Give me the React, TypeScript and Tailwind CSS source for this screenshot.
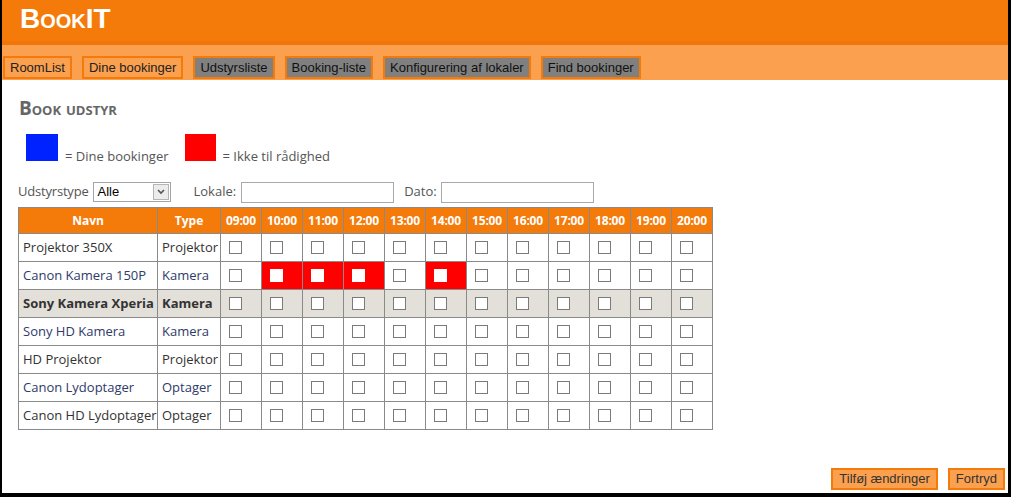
import React from "react";

const hours = ["09:00", "10:00", "11:00", "12:00", "13:00", "14:00", "15:00", "16:00", "17:00", "18:00", "19:00", "20:00"];

const rows = [
    { name: "Projektor 350X", type: "Projektor", taken: [] as number[] },
    { name: "Canon Kamera 150P", type: "Kamera", taken: [1, 2, 3, 5] },
    { name: "Sony Kamera Xperia", type: "Kamera", taken: [], selected: true },
    { name: "Sony HD Kamera", type: "Kamera", taken: [] },
    { name: "HD Projektor", type: "Projektor", taken: [] },
    { name: "Canon Lydoptager", type: "Optager", taken: [] },
    { name: "Canon HD Lydoptager", type: "Optager", taken: [] },
];

const navItems = [
    { label: "RoomList", active: true },
    { label: "Dine bookinger", active: true },
    { label: "Udstyrsliste", active: false },
    { label: "Booking-liste", active: false },
    { label: "Konfigurering af lokaler", active: false },
    { label: "Find bookinger", active: false },
];

function Box({ taken }: { taken: boolean }) {
    return (
        <span
            className={
                taken
                    ? "block w-[13px] h-[13px] bg-white"
                    : "block w-[13px] h-[13px] bg-white border border-[#7a7a7a]"
            }
        />
    );
}

export default function App() {
    return (
        <div className="w-[1011px] h-[497px] bg-black pl-[2px] pr-[3px] pb-[4px] flex flex-col">
            <div className="flex-1 bg-white flex flex-col font-['Open_Sans',sans-serif]">
                <div className="h-[45px] bg-[#f47b0a] border-b-[4px] border-[#f17508] flex items-center pl-[18px]">
                    <h1 className="text-white font-bold text-[28px] [font-variant:small-caps] leading-none font-['Liberation_Sans',Arial,sans-serif] -mt-[4px]">
                        BookIT
                    </h1>
                </div>

                <nav className="h-[35px] bg-[#fba04e] flex items-end gap-[10px] pl-[1px] pb-[1px]">
                    {navItems.map((item) => (
                        <span
                            key={item.label}
                            className={
                                item.active
                                    ? "h-[23px] flex items-center px-[5px] border-2 border-[#f47b0a] bg-[#fba04e] text-[13px] text-[#222] font-['Liberation_Sans',Arial,sans-serif]"
                                    : "h-[23px] flex items-center px-[5px] border-2 border-[#f47b0a] bg-[#808080] text-[13px] text-[#111] font-['Liberation_Sans',Arial,sans-serif]"
                            }
                        >
                            {item.label}
                        </span>
                    ))}
                </nav>

                <div className="flex-1 flex flex-col px-[16px]">
                    <h2 className="mt-[19px] ml-[1px] text-[19px] font-bold text-[#666] [font-variant:small-caps] leading-none font-['Open_Sans',sans-serif]">
                        Book udstyr
                    </h2>

                    <div className="mt-[16px] ml-[8px] flex items-end text-[13px] text-[#555]">
                        <span className="w-[32px] h-[27px] bg-[#0022ff]" />
                        <span className="ml-[7px] mb-[-5px]">= Dine bookinger</span>
                        <span className="ml-[16px] w-[31px] h-[27px] bg-[#ff0000]" />
                        <span className="ml-[7px] mb-[-5px]">= Ikke til rådighed</span>
                    </div>

                    <div className="mt-[20px] flex items-center text-[13px] text-[#555] h-[22px]">
                        <span className="tracking-[-0.2px]">Udstyrstype</span>
                        <div className="ml-[5px] w-[78px] h-[20px] border border-[#a5a5a5] flex items-center justify-between">
                            <span className="pl-[3px] text-black text-[13px] font-['Liberation_Sans',Arial,sans-serif]">Alle</span>
                            <span className="w-[16px] h-[16px] mr-[1px] bg-[#ececec] border border-[#b5b5b5] flex items-center justify-center">
                                <svg width="8" height="6" viewBox="0 0 8 6">
                                    <path d="M1 1 L4 4 L7 1" stroke="#555" strokeWidth="1.6" fill="none" />
                                </svg>
                            </span>
                        </div>
                        <span className="ml-[22px]">Lokale:</span>
                        <span className="ml-[5px] w-[153px] h-[21px] border border-[#a9a9a9]" />
                        <span className="ml-[10px]">Dato:</span>
                        <span className="ml-[4px] w-[153px] h-[21px] border border-[#a9a9a9]" />
                    </div>

                    <table className="mt-[4px] table-fixed border-collapse w-[695px] text-[13px]">
                        <colgroup>
                            <col className="w-[139px]" />
                            <col className="w-[63px]" />
                            {hours.map((h) => (
                                <col key={h} className="w-[41px]" />
                            ))}
                        </colgroup>
                        <thead>
                            <tr className="h-[26px] bg-[#f47b0a] text-white text-[12px] font-bold">
                                <th className="border border-[#8a8a8a] text-center">Navn</th>
                                <th className="border border-[#8a8a8a] text-center">Type</th>
                                {hours.map((h) => (
                                    <th key={h} className="border border-[#8a8a8a] text-center px-0 tracking-[-0.2px]">
                                        {h}
                                    </th>
                                ))}
                            </tr>
                        </thead>
                        <tbody>
                            {rows.map((row, i) => {
                                const tone = row.selected
                                    ? "text-[#333] font-bold"
                                    : i % 2 === 1
                                    ? "text-[#2e3a6a]"
                                    : "text-[#333]";
                                return (
                                    <tr key={row.name} className={row.selected ? "h-[28px] bg-[#e3e0da]" : "h-[28px] bg-white"}>
                                        <td className={"border border-[#8a8a8a] pl-[4px] whitespace-nowrap " + tone}>{row.name}</td>
                                        <td className={"border border-[#8a8a8a] pl-[4px] whitespace-nowrap " + tone}>{row.type}</td>
                                        {hours.map((h, j) => {
                                            const taken = row.taken.includes(j);
                                            return (
                                                <td
                                                    key={h}
                                                    className={
                                                        taken
                                                            ? "border border-[#8a8a8a] bg-[#ff0000] pl-[8px]"
                                                            : "border border-[#8a8a8a] pl-[8px]"
                                                    }
                                                >
                                                    <Box taken={taken} />
                                                </td>
                                            );
                                        })}
                                    </tr>
                                );
                            })}
                        </tbody>
                    </table>

                    <div className="mt-auto mb-[3px] -mr-[13px] flex justify-end gap-[10px] font-['Liberation_Sans',Arial,sans-serif] text-[13px] text-[#333]">
                        <span className="h-[22px] px-[6px] flex items-center border-2 border-[#f47b0a] bg-[#fba04e]">Tilføj ændringer</span>
                        <span className="h-[22px] px-[6px] flex items-center border-2 border-[#f47b0a] bg-[#fba04e]">Fortryd</span>
                    </div>
                </div>
            </div>
        </div>
    );
}
